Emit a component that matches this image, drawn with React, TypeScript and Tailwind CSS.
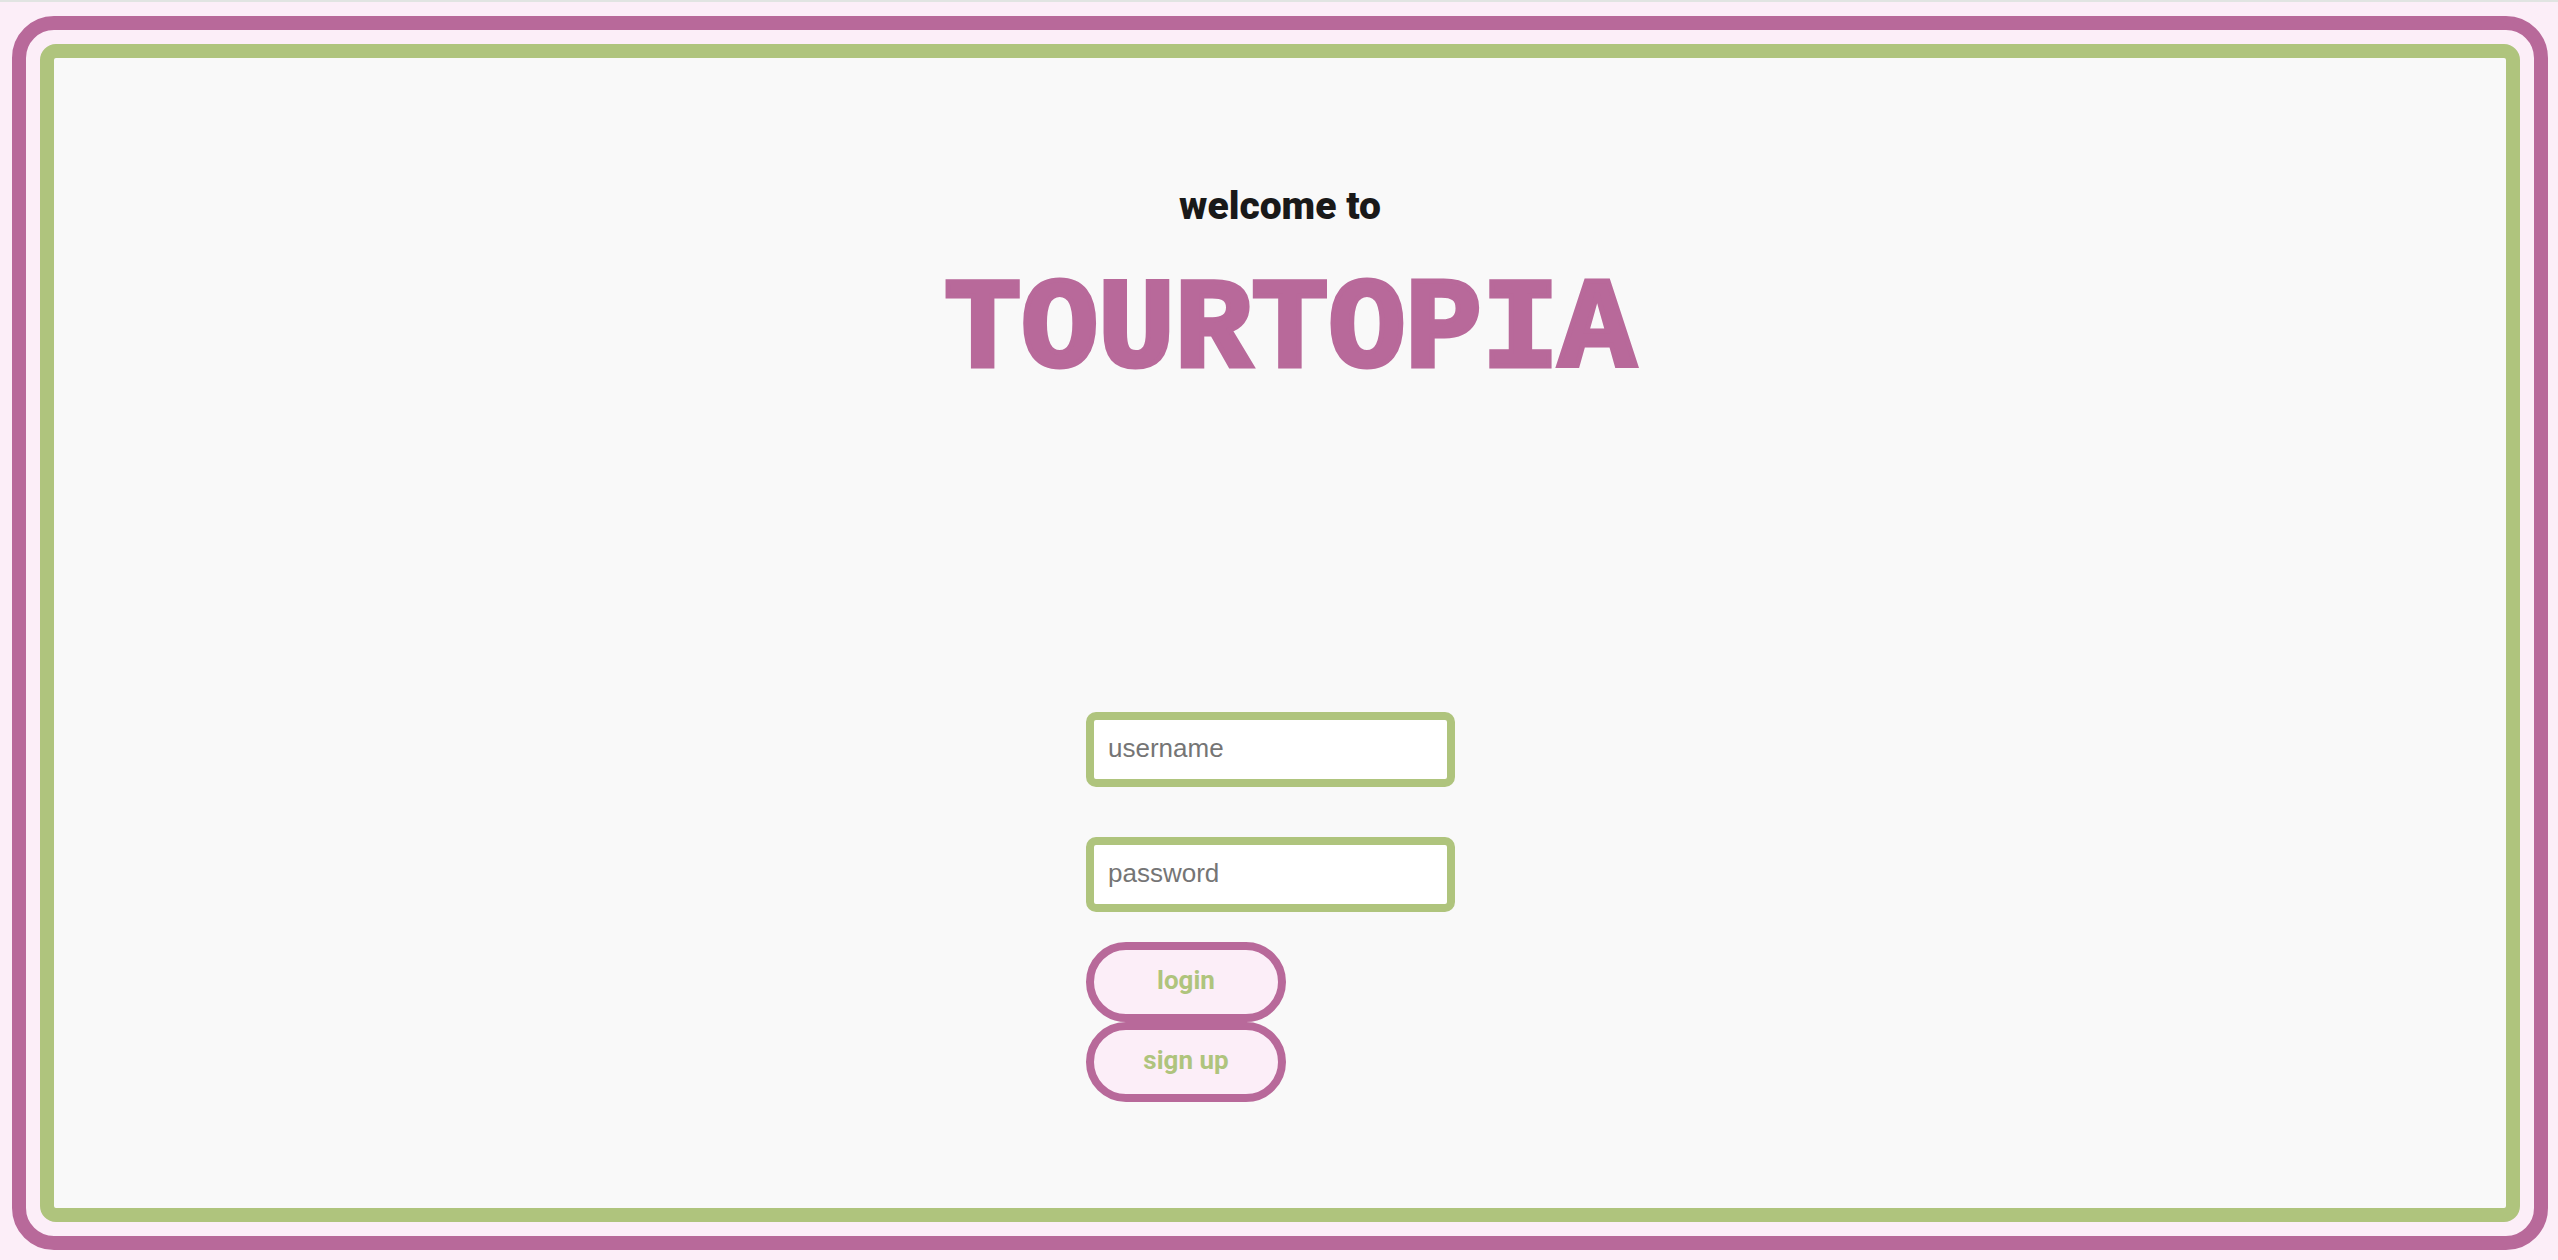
import React from 'react';

const fieldClass =
  'h-[75px] w-[369px] rounded-[10px] border-8 border-[#afc47d] bg-white px-3.5 pb-0.5 font-["Liberation_Sans",Arial,sans-serif] text-[26px] text-[#191919] placeholder:text-[#757575]';

const buttonClass =
  'h-20 w-[200px] rounded-full border-8 border-[#b8699a] bg-[#fceef8] pb-1 text-center text-[26px] font-bold text-[#afc47d]';

export default function App() {
  return (
    <div className='flex min-h-screen flex-col border-t-2 border-[#e1e4e2] bg-[#fceef8] pt-3.5 pr-2.5 pb-2.5 pl-3 font-[Roboto,sans-serif] text-[#191919]'>
      <div className="flex flex-1 flex-col rounded-[42px] border-[14px] border-[#b8699a] p-3.5">
        <main className="flex flex-1 flex-col items-center rounded-2xl border-[14px] border-[#afc47d] bg-[#f9f9f9] pt-[122px] pb-[106px]">
          <h2 className="text-[39px] leading-[52px] font-black">welcome to</h2>
          <h1 className='mt-7 pl-5 font-["Liberation_Mono",monospace] text-[128px] leading-[144px] font-bold text-[#b8699a] [-webkit-text-stroke:5px_#b8699a]'>
            TOURTOPIA
          </h1>
          <form className="mt-auto flex w-[388px] flex-col items-start" onSubmit={(e) => e.preventDefault()}>
            <input className={fieldClass} type="text" name="username" placeholder="username" aria-label="username" />
            <input className={`${fieldClass} mt-[50px]`} type="password" name="password" placeholder="password" aria-label="password" />
            <button className={`${buttonClass} mt-[30px]`} type="submit">login</button>
            <button className={buttonClass} type="button">sign up</button>
          </form>
        </main>
      </div>
    </div>
  );
}
